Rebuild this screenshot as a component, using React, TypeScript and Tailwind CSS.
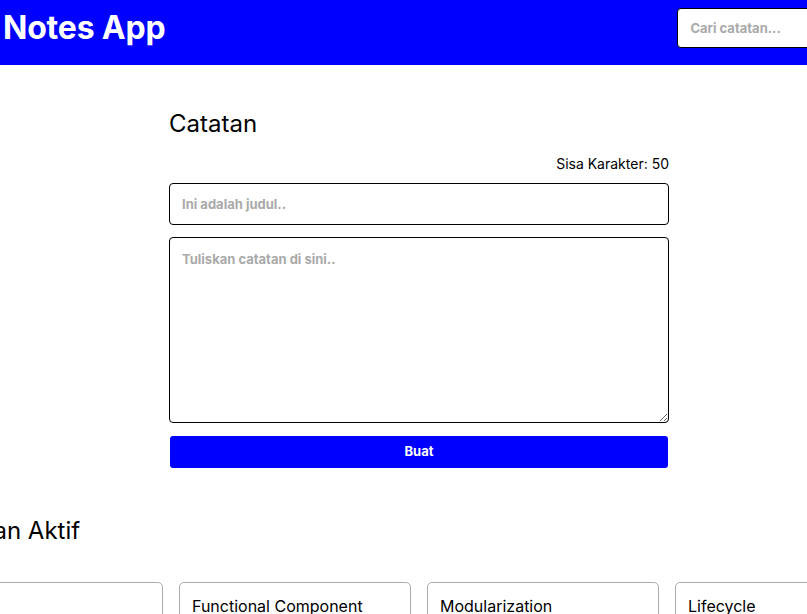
import React from "react";

const notes = [
  { title: "Babel", date: "Kamis, 14 April 2022", body: "Babel merupakan tools open-source yang digunakan untuk mengubah sintaks ECMAScript 2015+ menjadi sintaks yang didukung oleh JavaScript engine versi lama." },
  { title: "Functional Component", date: "Kamis, 14 April 2022", body: "Functional component merupakan React component yang dibuat menggunakan fungsi JavaScript." },
  { title: "Modularization", date: "Kamis, 14 April 2022", body: "Dalam konteks pemrograman JavaScript, modularization merupakan teknik dalam memecah atau menggunakan kode dalam berkas JavaScript secara terpisah berdasarkan tanggung jawabnya masing-masing." },
  { title: "Lifecycle", date: "Kamis, 14 April 2022", body: "Dalam konteks React component, lifecycle merupakan kumpulan method yang menjadi siklus hidup mulai dari component dibuat (constructor), dicetak (render), pasca-cetak (componentDidMount), dan sebagainya." },
];

export default function App() {
  return (
    <div
      className="w-[807px] h-[614px] overflow-hidden bg-white text-black"
      style={{ fontFamily: "Inter, 'Noto Sans', sans-serif" }}
    >
      <header className="w-[900px] h-[65px] bg-[#0000ff] flex items-start pl-[3px]">
        <h1 className="mt-[12px] text-[32px] font-bold text-white leading-none tracking-[-0.2px]">Notes App</h1>
        <input
          className="mt-[8px] ml-[512px] w-[200px] h-[40px] shrink-0 bg-white border border-black rounded-[4px] px-[12px] text-[13px] font-bold placeholder:text-[#aaa] outline-none"
          placeholder="Cari catatan..."
        />
      </header>
      <main>
        <section className="w-[500px] ml-[169px] pt-[43px]">
          <h2 className="text-[24px] leading-[32px] font-normal">Catatan</h2>
          <p className="mt-[14px] text-[14px] leading-[20px] text-right">Sisa Karakter: 50</p>
          <input
            className="mt-[9px] block w-full h-[42px] border border-black rounded-[4px] px-[12px] text-[13px] font-bold placeholder:text-[#aaa] outline-none"
            placeholder="Ini adalah judul.."
          />
          <textarea
            className="mt-[12px] block w-full h-[186px] border border-black rounded-[4px] px-[12px] py-[12px] text-[13px] font-bold placeholder:text-[#aaa] outline-none"
            placeholder="Tuliskan catatan di sini.."
          />
          <button className="mt-[13px] mx-[1px] block w-[498px] h-[32px] bg-[#0000ff] text-white text-[13px] font-bold rounded-[3px]">
            Buat
          </button>
        </section>
        <section className="mt-[47px] w-[1100px]">
          <h2 className="ml-[-67px] text-[24px] leading-[32px] font-normal">Catatan Aktif</h2>
          <div className="ml-[-69px] mt-[35px] flex gap-[16px]">
            {notes.map((n) => (
              <div key={n.title} className="w-[232px] shrink-0 border border-[#aaa] rounded-[5px] px-[12px] pt-[11px] pb-[12px]">
                <h3 className="text-[16px] leading-[24px]">{n.title}</h3>
                <p className="text-[12px] text-[#666] mt-1">{n.date}</p>
                <p className="text-[14px] mt-2">{n.body}</p>
              </div>
            ))}
          </div>
        </section>
      </main>
    </div>
  );
}
